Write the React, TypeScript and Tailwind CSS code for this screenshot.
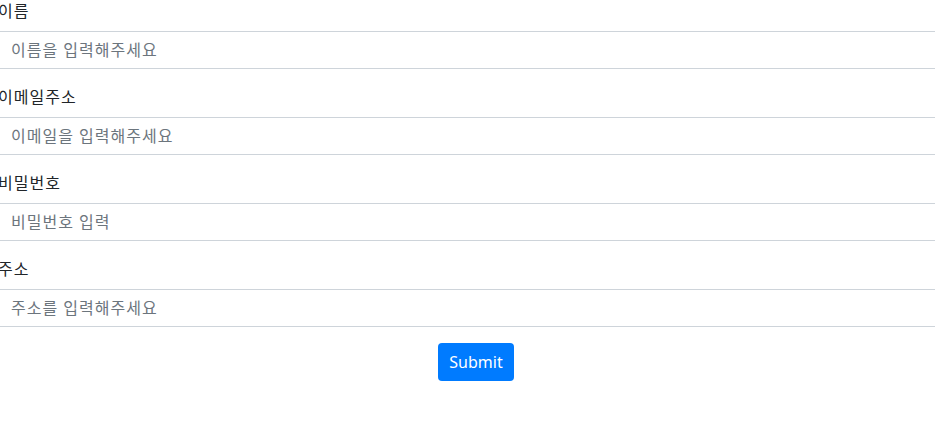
const fields = [
  { id: "name", label: "이름", placeholder: "이름을 입력해주세요", type: "text" },
  { id: "email", label: "이메일주소", placeholder: "이메일을 입력해주세요", type: "email" },
  { id: "password", label: "비밀번호", placeholder: "비밀번호 입력", type: "password" },
  { id: "address", label: "주소", placeholder: "주소를 입력해주세요", type: "text" },
]

export default function App() {
  return (
    <div className="w-full h-[428px] overflow-hidden bg-white font-['Noto_Sans','Noto_Sans_CJK_KR',sans-serif] text-[#212529]">
      <form className="-ml-[2px] -mt-px w-[956px]" onSubmit={e => e.preventDefault()}>
        {fields.map(f => (
          <div key={f.id} className="mb-4">
            <label htmlFor={f.id} className="block mb-2 text-base leading-6 tracking-[1px]">
              {f.label}
            </label>
            <input
              id={f.id}
              type="text"
              placeholder={f.placeholder}
              className="block w-full h-[38px] px-3 py-1.5 text-base leading-6 tracking-[1px] border border-[#ced4da] rounded-none outline-none placeholder:text-[#6c757d]"
            />
          </div>
        ))}
        <div className="flex justify-center">
          <button
            type="submit"
            className="h-[38px] px-[11px] rounded bg-[#007bff] text-white text-base leading-6"
          >
            Submit
          </button>
        </div>
      </form>
    </div>
  )
}
